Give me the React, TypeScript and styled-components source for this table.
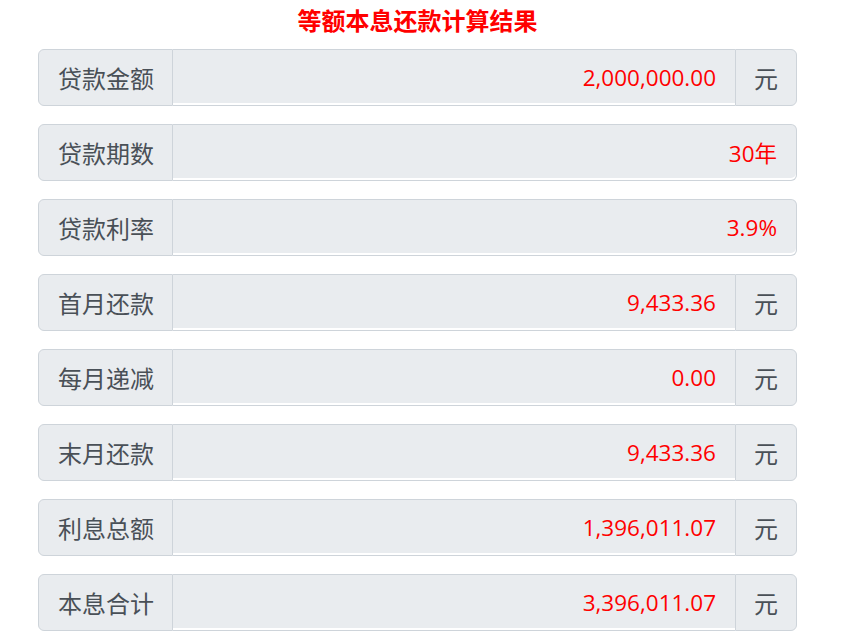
import styled, { createGlobalStyle } from 'styled-components';

const GlobalStyle = createGlobalStyle`
  body {
    margin: 0;
    background: #ffffff;
    font-family: "Noto Sans CJK SC", "Noto Sans", sans-serif;
  }
`;

const Page = styled.div`
  width: 759px;
  padding-left: 38px;
  display: flex;
  flex-direction: column;
`;

const Title = styled.h2`
  margin: 5px 0 0;
  height: 44px;
  line-height: 30px;
  text-align: center;
  font-size: 24px;
  font-weight: 700;
  color: #ff0000;
`;

const Rows = styled.div`
  display: flex;
  flex-direction: column;
  gap: 18px;
`;

const Group = styled.div`
  display: flex;
  height: 57px;
`;

const Label = styled.div`
  display: flex;
  align-items: center;
  box-sizing: border-box;
  width: 135px;
  padding: 0 19px;
  background: #e9ecef;
  border: 1px solid #ced4da;
  border-radius: 6px 0 0 6px;
  font-size: 24px;
  color: #495057;
  white-space: nowrap;
`;

const Value = styled.div<{ $last: boolean }>`
  flex: 1;
  display: flex;
  align-items: center;
  justify-content: flex-end;
  box-sizing: border-box;
  padding: 0 19px;
  background: #e9ecef;
  border: 1px solid #ced4da;
  border-left: none;
  border-right: ${({ $last }) => ($last ? '1px solid #ced4da' : 'none')};
  border-radius: ${({ $last }) => ($last ? '0 6px 6px 0' : '0')};
  box-shadow: inset 0 -2px 0 #ffffff;
  font-size: 22.5px;
  color: #ff0000;
  font-family: "Open Sans", "Noto Sans CJK SC", sans-serif;
`;

const Unit = styled.div`
  display: flex;
  align-items: center;
  justify-content: center;
  box-sizing: border-box;
  width: 62px;
  background: #e9ecef;
  border: 1px solid #ced4da;
  border-radius: 0 6px 6px 0;
  font-size: 24px;
  color: #495057;
`;

const rows = [
  { label: '贷款金额', value: '2,000,000.00', unit: '元' },
  { label: '贷款期数', value: '30年' },
  { label: '贷款利率', value: '3.9%' },
  { label: '首月还款', value: '9,433.36', unit: '元' },
  { label: '每月递减', value: '0.00', unit: '元' },
  { label: '末月还款', value: '9,433.36', unit: '元' },
  { label: '利息总额', value: '1,396,011.07', unit: '元' },
  { label: '本息合计', value: '3,396,011.07', unit: '元' },
];

export default function App() {
  return (
    <>
      <GlobalStyle />
      <Page>
        <Title>等额本息还款计算结果</Title>
        <Rows>
          {rows.map((r) => (
            <Group key={r.label}>
              <Label>{r.label}</Label>
              <Value $last={!r.unit}>{r.value}</Value>
              {r.unit && <Unit>{r.unit}</Unit>}
            </Group>
          ))}
        </Rows>
      </Page>
    </>
  );
}
